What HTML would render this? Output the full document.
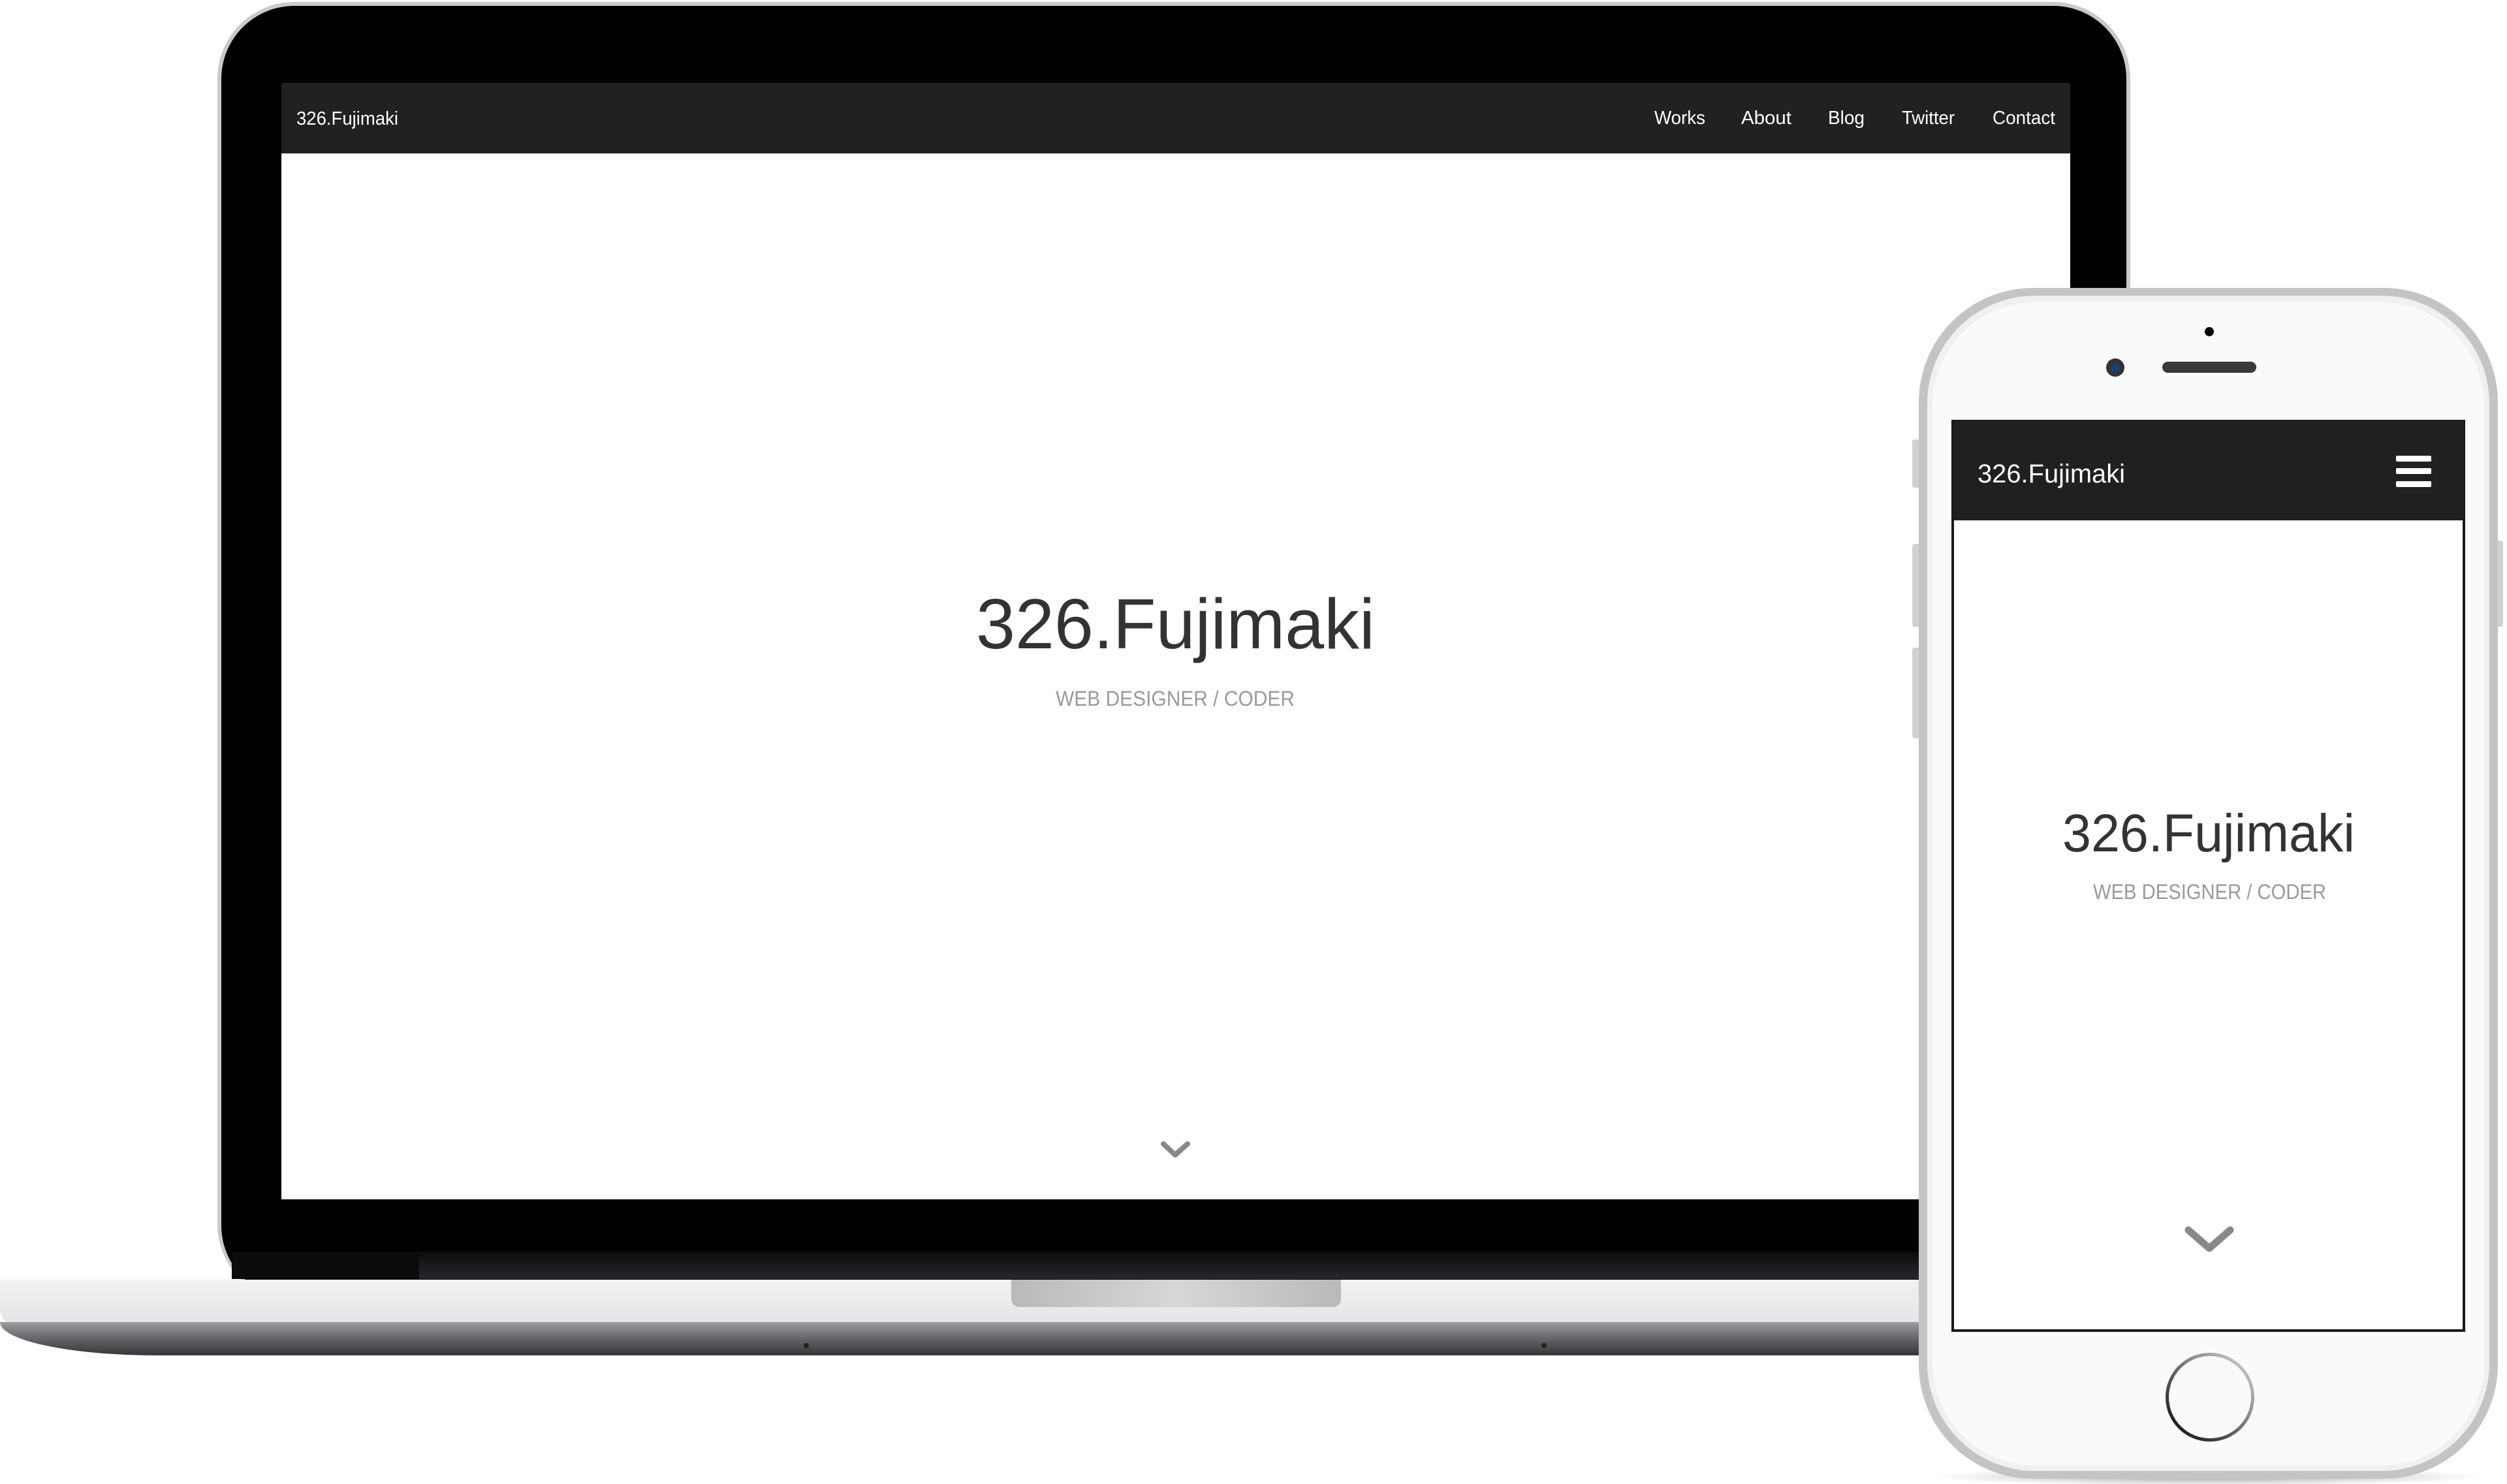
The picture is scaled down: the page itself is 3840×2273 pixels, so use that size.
<!DOCTYPE html>
<html><head><meta charset="utf-8"><style>
html,body{margin:0;padding:0;background:#fff;width:3840px;height:2273px;overflow:hidden}
svg{display:block}
text{font-family:"Liberation Sans",sans-serif}
</style></head><body>
<svg width="3840" height="2273" viewBox="0 0 3840 2273" xmlns="http://www.w3.org/2000/svg">
<defs>
<linearGradient id="base" x1="0" y1="0" x2="0" y2="1">
<stop offset="0" stop-color="#f2f2f3"/><stop offset="0.55" stop-color="#e4e5e7"/><stop offset="1" stop-color="#d9dadc"/>
</linearGradient>
<linearGradient id="baseLow" x1="0" y1="0" x2="0" y2="1">
<stop offset="0" stop-color="#9c9da0"/><stop offset="0.4" stop-color="#6e6f73"/><stop offset="1" stop-color="#343538"/>
</linearGradient>
<linearGradient id="notch" x1="0" y1="0" x2="1" y2="0">
<stop offset="0" stop-color="#b8b9bb"/><stop offset="0.5" stop-color="#d6d7d9"/><stop offset="1" stop-color="#b8b9bb"/>
</linearGradient>
<linearGradient id="hinge" x1="0" y1="0" x2="0" y2="1">
<stop offset="0" stop-color="#0b0c0e"/><stop offset="1" stop-color="#25272b"/>
</linearGradient>
<linearGradient id="home" x1="1" y1="0" x2="0" y2="1">
<stop offset="0" stop-color="#e0e0e0"/><stop offset="1" stop-color="#000"/>
</linearGradient>
<radialGradient id="shadow" cx="0.5" cy="0.5" r="0.5">
<stop offset="0" stop-color="#000" stop-opacity="0.35"/><stop offset="1" stop-color="#000" stop-opacity="0"/>
</radialGradient>
</defs>

<!-- Laptop lid -->
<rect x="333" y="3" width="2930" height="1990" rx="118" fill="#c9cacc"/>
<rect x="339" y="9" width="2918" height="1980" rx="112" fill="#000"/>
<rect x="355" y="1917" width="2900" height="42" fill="url(#hinge)"/>
<rect x="355" y="1917" width="287" height="42" fill="#0a0b0c"/>

<!-- Laptop screen -->
<rect x="431" y="127" width="2740" height="1710" fill="#fff"/>
<rect x="431" y="127" width="2740" height="108" fill="#212121"/>
<text x="454" y="191" font-size="29" fill="#fff" textLength="156" lengthAdjust="spacingAndGlyphs">326.Fujimaki</text>
<text x="2534" y="190" font-size="29" fill="#fff" textLength="78" lengthAdjust="spacingAndGlyphs">Works</text>
<text x="2667" y="190" font-size="29" fill="#fff" textLength="77" lengthAdjust="spacingAndGlyphs">About</text>
<text x="2800" y="190" font-size="29" fill="#fff" textLength="56" lengthAdjust="spacingAndGlyphs">Blog</text>
<text x="2913" y="190" font-size="29" fill="#fff" textLength="81" lengthAdjust="spacingAndGlyphs">Twitter</text>
<text x="3052" y="190" font-size="29" fill="#fff" textLength="96" lengthAdjust="spacingAndGlyphs">Contact</text>
<text x="1495" y="993" font-size="109" fill="#333" textLength="611" lengthAdjust="spacingAndGlyphs">326.Fujimaki</text>
<text x="1617" y="1081" font-size="32" fill="#9a9a9a" textLength="366" lengthAdjust="spacingAndGlyphs">WEB DESIGNER / CODER</text>
<polyline points="1782,1752 1800,1769 1819,1752" fill="none" stroke="#888" stroke-width="8" stroke-linecap="round" stroke-linejoin="round"/>

<!-- Laptop base -->
<path d="M0,1960 H3000 V2076 H240 A240,70 0 0 1 0,2006 Z" fill="url(#base)"/>
<path d="M0,2025 H3000 V2076 H240 A240,51 0 0 1 0,2025 Z" fill="url(#baseLow)"/>
<path d="M1549,1960 H2054 V1988 Q2054,2002 2040,2002 H1563 Q1549,2002 1549,1988 Z" fill="url(#notch)"/>
<circle cx="1235" cy="2061" r="4" fill="#222"/>
<circle cx="2365" cy="2061" r="4" fill="#222"/>

<!-- Phone shadow -->
<ellipse cx="3382" cy="2262" rx="420" ry="14" fill="url(#shadow)"/>

<!-- Phone side buttons -->
<rect x="2929" y="673" width="14" height="74" rx="4" fill="#d0d0d2"/>
<rect x="2929" y="833" width="14" height="127" rx="4" fill="#d0d0d2"/>
<rect x="2929" y="992" width="14" height="139" rx="4" fill="#d0d0d2"/>
<rect x="3820" y="828" width="14" height="132" rx="4" fill="#d0d0d2"/>

<!-- Phone -->
<rect x="2939" y="441" width="887" height="1824" rx="175" fill="#c3c4c6"/>
<rect x="2952" y="453" width="861" height="1800" rx="165" fill="#f0f0f1"/>
<rect x="2960" y="463" width="845" height="1782" rx="158" fill="#f9fafb"/>
<circle cx="3384" cy="508" r="7" fill="#000"/>
<circle cx="3240" cy="563" r="14" fill="#333"/>
<circle cx="3240" cy="563" r="7" fill="#1b3d7a"/>
<rect x="3312" y="554" width="144" height="17" rx="8.5" fill="#3a3a3c"/>

<!-- Phone screen -->
<rect x="2989" y="643" width="787" height="1397" fill="#1a1a1a"/>
<rect x="2993" y="647" width="779" height="1389" fill="#fff"/>
<rect x="2991" y="645" width="783" height="152" fill="#202020"/>
<text x="3029" y="739" font-size="40" fill="#fff" textLength="226" lengthAdjust="spacingAndGlyphs">326.Fujimaki</text>
<rect x="3670" y="698" width="54" height="9" rx="2" fill="#fff"/>
<rect x="3670" y="717" width="54" height="9" rx="2" fill="#fff"/>
<rect x="3670" y="737" width="54" height="9" rx="2" fill="#fff"/>
<text x="3159" y="1304" font-size="82" fill="#333" textLength="448" lengthAdjust="spacingAndGlyphs">326.Fujimaki</text>
<text x="3206" y="1377" font-size="32" fill="#9a9a9a" textLength="357" lengthAdjust="spacingAndGlyphs">WEB DESIGNER / CODER</text>
<polyline points="3352,1884 3384,1912 3416,1884" fill="none" stroke="#888" stroke-width="11" stroke-linecap="round" stroke-linejoin="round"/>

<!-- Home button -->
<circle cx="3385" cy="2140" r="68" fill="url(#home)"/>
<circle cx="3385" cy="2140" r="63" fill="#f9fafb"/>
</svg>
</body></html>
